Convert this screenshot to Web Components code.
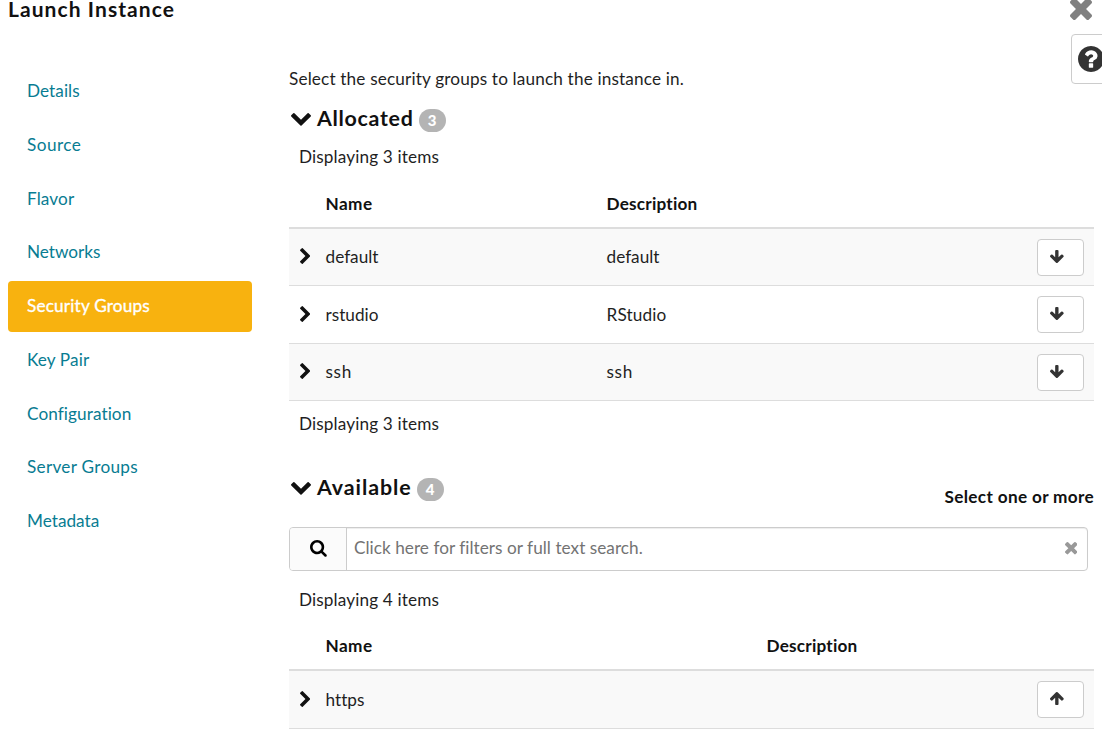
<!DOCTYPE html>
<html lang="en">
<head>
<meta charset="utf-8">
<title>Launch Instance</title>
<style>
html,body{margin:0;padding:0;background:#fff;height:730px;overflow:hidden}
body{font:17.2px/24px Lato,"Open Sans",sans-serif;color:#1f1f1f}
</style>
</head>
<body>
<launch-dialog></launch-dialog>
<script>
const ICONS = {
  down: ['90 533 1612 1035','M1683 808l-742 741q-19 19-45 19t-45-19l-742-741q-19-19-19-45.5t19-45.5l166-165q19-19 45-19t45 19l531 531 531-531q19-19 45-19t45 19l166 165q19 19 19 45.5t-19 45.5z'],
  right: ['346 26 1036 1612','M1363 877l-742 742q-19 19-45 19t-45-19l-166-166q-19-19-19-45t19-45l531-531-531-531q-19-19-19-45t19-45l166-166q19-19 45-19t45 19l742 742q19 19 19 45t-19 45z'],
  times: ['302 366 1188 1188','M1490 1322q0 40-28 68l-136 136q-28 28-68 28t-68-28l-294-294-294 294q-28 28-68 28t-68-28l-136-136q-28-28-28-68t28-68l294-294-294-294q-28-28-28-68t28-68l136-136q28-28 68-28t68 28l294 294 294-294q28-28 68-28t68 28l136 136q28 28 28 68t-28 68l-294 294 294 294q28 28 28 68z'],
  search: ['64 128 1664 1664','M1216 832q0-185-131.5-316.5t-316.5-131.5-316.5 131.5-131.5 316.5 131.5 316.5 316.5 131.5 316.5-131.5 131.5-316.5zm512 832q0 52-38 90t-90 38q-54 0-90-38l-343-342q-179 124-399 124-143 0-273.5-55.5t-225-150-150-225-55.5-273.5 55.5-273.5 150-225 225-150 273.5-55.5 273.5 55.5 225 150 150 225 55.5 273.5q0 220-124 399l343 343q37 37 37 90z'],
  arrow: ['117 128 1558 1483','M1675 832q0 53-37 90l-651 652q-39 37-91 37-53 0-90-37l-651-652q-38-36-38-90 0-53 38-91l74-75q39-37 91-37 53 0 90 37l294 294v-704q0-52 38-90t90-38h128q52 0 90 38t38 90v704l294-294q37-37 90-37 52 0 91 37l75 75q37 39 37 91z'],
  help: ['128 128 1536 1536','M1024 1376v-192q0-14-9-23t-23-9h-192q-14 0-23 9t-9 23v192q0 14 9 23t23 9h192q14 0 23-9t9-23zm256-672q0-88-55.5-163t-138.5-116-170-41q-243 0-371 213-15 24 8 42l132 100q7 6 19 6 16 0 25-12 53-68 86-92 34-24 86-24 48 0 85.5 26t37.5 59q0 38-20 61t-68 45q-63 28-115.5 86.5t-52.5 125.5v36q0 14 9 23t23 9h192q14 0 23-9t9-23q0-19 21.5-49.5t54.5-49.5q32-18 49-28.5t46-35 44.5-48 28-60.5 12.5-81zm384 192q0 209-103 385.5t-279.5 279.5-385.5 103-385.5-103-279.5-279.5-103-385.5 103-385.5 279.5-279.5 385.5-103 385.5 103 279.5 279.5 103 385.5z']
};
function define(name, html, init) {
  customElements.define(name, class extends HTMLElement {
    connectedCallback() {
      if (this.shadowRoot) return;
      this.attachShadow({mode: 'open'}).innerHTML = typeof html === 'function' ? html(this) : html;
      if (init) init(this);
    }
  });
}

define('ui-icon', el => {
  const [box, d] = ICONS[el.getAttribute('name')];
  const [, , w, h] = box.split(' ').map(Number);
  const size = +el.getAttribute('width');
  return `<style>:host{display:block;flex:none}svg{display:block;fill:currentColor}:host([flip]) svg{transform:scaleY(-1)}</style>
  <svg width="${size}" height="${(size * h / w).toFixed(2)}" viewBox="${box}"><path d="${d}"/></svg>`;
});

/* A line of text tracked to an exact set width. */
define('ui-text', `<style>:host{display:inline-block;justify-self:start;white-space:nowrap;flex:none}</style><slot></slot>`, el => {
  const target = +el.getAttribute('width');
  if (!target) return;
  const natural = el.getBoundingClientRect().width;
  el.style.letterSpacing = ((target - natural) / el.textContent.length).toFixed(3) + 'px';
});

define('nav-item', `<style>
:host{display:flex;align-items:center;box-sizing:border-box;height:51px;padding:0 0 1px 19px;border-radius:4px;color:#087c92}
:host([active]){background:#f8b20f;color:#fff;-webkit-text-stroke:.35px #fff}
</style><slot></slot>`);

define('section-title', el => `<style>
:host{display:flex;align-items:center;font-size:21.4px;font-weight:700;color:#111;line-height:26px}
ui-icon{margin:4px 6.5px 0 1.5px}
.badge{width:27px;height:23px;border-radius:12px;background:#b4b4b4;color:#fff;font-size:15px;font-weight:900;line-height:23px;text-align:center;margin:6px 0 0 5px}
</style><ui-icon name="down" width="20"></ui-icon><slot></slot><span class="badge">${el.getAttribute('count')}</span>`);

define('table-head', `<style>
:host{display:grid;grid-template-columns:36.5px var(--name-col) 1fr;align-items:center;box-sizing:border-box;height:59px;padding-top:11px;border-bottom:2px solid #ddd;font-weight:700;color:#111}
::slotted(:first-child){grid-column:2}
</style><slot></slot>`);

define('table-row', el => `<style>
:host{display:grid;grid-template-columns:36.5px var(--name-col) 1fr 47px;align-items:center;box-sizing:border-box;height:58px;padding-right:10px;border-bottom:1px solid #ddd}
:host([short]){height:57px}
:host([shade]){background:#f9f9f9}
.chev{margin:-1px 0 0 11px;color:#111}
button{all:unset;box-sizing:border-box;width:47px;height:37px;border:1px solid #ccc;border-radius:4px;background:#fff;color:#333;display:flex;align-items:center;padding:0 0 1px 12.2px}
:host([short]) button{margin-top:1px}
</style><ui-icon class="chev" name="right" width="10.3"></ui-icon><slot></slot>
<button aria-label="Move"><ui-icon name="arrow" width="13.7" ${el.hasAttribute('up') ? 'flip' : ''}></ui-icon></button>`);

define('search-bar', `<style>
:host{display:flex;box-sizing:border-box;width:799px;height:44px;border:1px solid #ccc;border-radius:4px;background:#fff;box-shadow:inset 0 1px 1px rgba(0,0,0,.075);overflow:hidden}
.lead{box-sizing:border-box;width:57px;border-right:1px solid #ccc;background:#fbfbfb;display:flex;align-items:center;padding:0 0 1px 20px;color:#000}
.field{flex:1;display:flex;align-items:center;justify-content:space-between;padding:0 10px 2px 7px;color:#737373}
.field ui-icon{color:#999;margin-top:1px}
</style><div class="lead"><ui-icon name="search" width="16.8"></ui-icon></div>
<div class="field"><slot></slot><ui-icon name="times" width="12.4"></ui-icon></div>`);

define('launch-dialog', `<style>
:host{display:block;position:relative;width:1102px;height:730px;overflow:hidden}
header{display:flex;justify-content:space-between;align-items:center;height:18px;line-height:18px;padding:0 10px 0 8px;font-size:21px;font-weight:700;color:#111}
header ui-icon{color:#808080}
.body{display:grid;grid-template-columns:244px 805px;column-gap:37px;padding:48px 0 0 8px}
nav{display:flex;flex-direction:column;gap:2.75px}
.intro{display:flex;align-items:center;box-sizing:border-box;height:25px;padding-top:1px}
section-title{height:53px}
.note{display:flex;align-items:center;box-sizing:border-box;padding:0 0 0 10px;height:26px}
.foot{height:46px}
.below{height:41px;padding-top:17px}
.bar{display:flex;justify-content:space-between;height:80px}
.bar section-title{height:79px}
.hint{font-weight:700;padding-top:38px;color:#111}
.one{--name-col:281px}.two{--name-col:441px}
.help{position:absolute;left:1071px;top:34px;box-sizing:border-box;width:50px;height:50px;border:1px solid #ccc;border-radius:4px;background:#fff;color:#333;display:flex;align-items:center;padding:0 0 1px 6.3px}
</style>
<header><ui-text width="167">Launch Instance</ui-text><ui-icon name="times" width="22"></ui-icon></header>
<div class="body">
<nav>
<nav-item><ui-text width="52.7">Details</ui-text></nav-item>
<nav-item><ui-text width="54.3">Source</ui-text></nav-item>
<nav-item><ui-text width="47.3">Flavor</ui-text></nav-item>
<nav-item><ui-text width="73.3">Networks</ui-text></nav-item>
<nav-item active><ui-text width="123">Security Groups</ui-text></nav-item>
<nav-item><ui-text width="62.3">Key Pair</ui-text></nav-item>
<nav-item><ui-text width="104.3">Configuration</ui-text></nav-item>
<nav-item><ui-text width="111">Server Groups</ui-text></nav-item>
<nav-item><ui-text width="72.3">Metadata</ui-text></nav-item>
</nav>
<main>
<div class="intro"><ui-text width="395">Select the security groups to launch the instance in.</ui-text></div>
<section-title count="3"><ui-text width="96.5">Allocated</ui-text></section-title>
<div class="note"><ui-text width="140">Displaying 3 items</ui-text></div>
<div class="one">
<table-head><ui-text width="47">Name</ui-text><ui-text width="91.3">Description</ui-text></table-head>
<table-row shade short><ui-text width="53">default</ui-text><ui-text width="53">default</ui-text></table-row>
<table-row><ui-text width="53">rstudio</ui-text><ui-text width="60">RStudio</ui-text></table-row>
<table-row shade short><ui-text width="26.5">ssh</ui-text><ui-text width="26.5">ssh</ui-text></table-row>
</div>
<div class="note foot"><ui-text width="140">Displaying 3 items</ui-text></div>
<div class="bar"><section-title count="4"><ui-text width="94.5">Available</ui-text></section-title><div class="hint"><ui-text width="149.5">Select one or more</ui-text></div></div>
<search-bar><ui-text width="288.5">Click here for filters or full text search.</ui-text></search-bar>
<div class="note below"><ui-text width="140">Displaying 4 items</ui-text></div>
<div class="two">
<table-head><ui-text width="47">Name</ui-text><ui-text width="91.3">Description</ui-text></table-head>
<table-row shade up><ui-text width="38.3">https</ui-text><span></span></table-row>
</div>
</main>
</div>
<div class="help"><ui-icon name="help" width="26"></ui-icon></div>`);
</script>
</body>
</html>
